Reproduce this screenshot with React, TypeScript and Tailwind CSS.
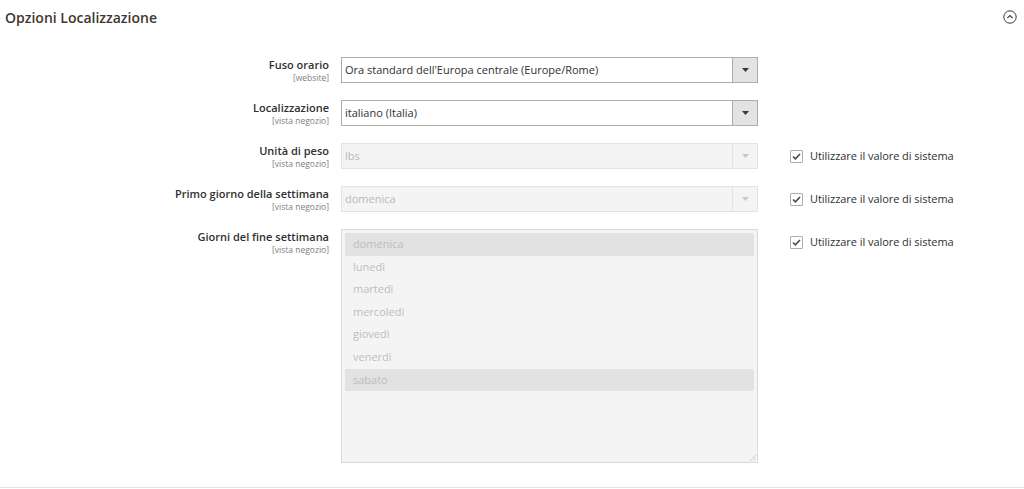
const font = 'font-["Open_Sans","Liberation_Sans",sans-serif]'

const weekDays = [
  { name: 'domenica', selected: true },
  { name: 'lunedì', selected: false },
  { name: 'martedì', selected: false },
  { name: 'mercoledì', selected: false },
  { name: 'giovedì', selected: false },
  { name: 'venerdì', selected: false },
  { name: 'sabato', selected: true },
]

function Label({ title, scope }: { title: string; scope: string }) {
  return (
    <div className="h-[26px] w-[329px] shrink-0 pt-[1px] text-right">
      <div className="text-[11px] font-semibold leading-[14px] text-[#303030]">{title}</div>
      <div className="text-[8.5px] leading-[11px] text-[#808080]">{scope}</div>
    </div>
  )
}

function Select({ value, disabled }: { value: string; disabled?: boolean }) {
  return (
    <div
      className={`flex h-[26px] w-[417px] border ${
        disabled ? 'border-[#e3e3e3] bg-[#f4f4f4]' : 'border-[#adadad] bg-white'
      }`}
    >
      <div
        className={`flex flex-1 items-center pl-[3px] text-[11px] ${
          disabled ? 'text-[#b9b9b9]' : 'text-[#303030]'
        }`}
      >
        {value}
      </div>
      <div
        className={`flex w-[25px] items-center justify-center border-l ${
          disabled ? 'border-[#e3e3e3] bg-[#f4f4f4]' : 'border-[#adadad] bg-[#e3e3e3]'
        }`}
      >
        <svg width="7" height="4" viewBox="0 0 7 4">
          <path d="M0 0h7L3.5 4z" fill={disabled ? '#c8c8c8' : '#41362f'} />
        </svg>
      </div>
    </div>
  )
}

function SystemValue() {
  return (
    <div className="ml-[20px] flex h-[26px] items-center gap-[7px]">
      <div className="flex h-[13px] w-[13px] items-center justify-center rounded-[1px] border border-[#adadad] bg-white">
        <svg width="9" height="7" viewBox="0 0 9 7">
          <path d="M1 3.5l2.4 2.3L8 1" fill="none" stroke="#514943" strokeWidth="1.6" />
        </svg>
      </div>
      <span className="text-[11px] tracking-[-0.05px] text-[#303030]">Utilizzare il valore di sistema</span>
    </div>
  )
}

export default function App() {
  return (
    <div className={`h-[489px] w-[1024px] overflow-hidden bg-white ${font}`}>
      {/* Section header */}
      <div className="flex h-[34px] items-center justify-between pl-[5px] pr-[7px]">
        <h2 className="text-[14px] font-semibold text-[#41362f]">Opzioni Localizzazione</h2>
        <svg width="14" height="14" viewBox="0 0 14 14">
          <circle cx="7" cy="7" r="6.2" fill="none" stroke="#41362f" strokeWidth="1" />
          <path d="M4.3 8.2L7 5.5l2.7 2.7" fill="none" stroke="#41362f" strokeWidth="1.1" />
        </svg>
      </div>

      {/* Fields */}
      <div className="mt-[23px] flex flex-col gap-[17px]">
        <div className="flex gap-[12px]">
          <Label title="Fuso orario" scope="[website]" />
          <Select value="Ora standard dell'Europa centrale (Europe/Rome)" />
        </div>
        <div className="flex gap-[12px]">
          <Label title="Localizzazione" scope="[vista negozio]" />
          <Select value="italiano (Italia)" />
        </div>
        <div className="flex gap-[12px]">
          <Label title="Unità di peso" scope="[vista negozio]" />
          <Select value="lbs" disabled />
          <SystemValue />
        </div>
        <div className="flex gap-[12px]">
          <Label title="Primo giorno della settimana" scope="[vista negozio]" />
          <Select value="domenica" disabled />
          <SystemValue />
        </div>
        <div className="flex items-start gap-[12px]">
          <Label title="Giorni del fine settimana" scope="[vista negozio]" />
          <div className="relative h-[234px] w-[417px] border border-[#dadada] bg-[#f4f4f4] px-[3px] pt-[3px]">
            {weekDays.map((d) => (
              <div
                key={d.name}
                className={`flex h-[22.6px] items-center pl-[8px] text-[11px] text-[#bdbdbd] ${
                  d.selected ? 'bg-[#e2e2e2]' : ''
                }`}
              >
                {d.name}
              </div>
            ))}
            <svg className="absolute bottom-[1px] right-[1px]" width="7" height="7" viewBox="0 0 7 7">
              <path d="M1 7L7 1M4 7l3-3" stroke="#c4c4c4" strokeWidth="0.8" />
            </svg>
          </div>
          <SystemValue />
        </div>
      </div>

      <div className="mt-[24px] h-px w-full bg-[#e3e3e3]" />
    </div>
  )
}
